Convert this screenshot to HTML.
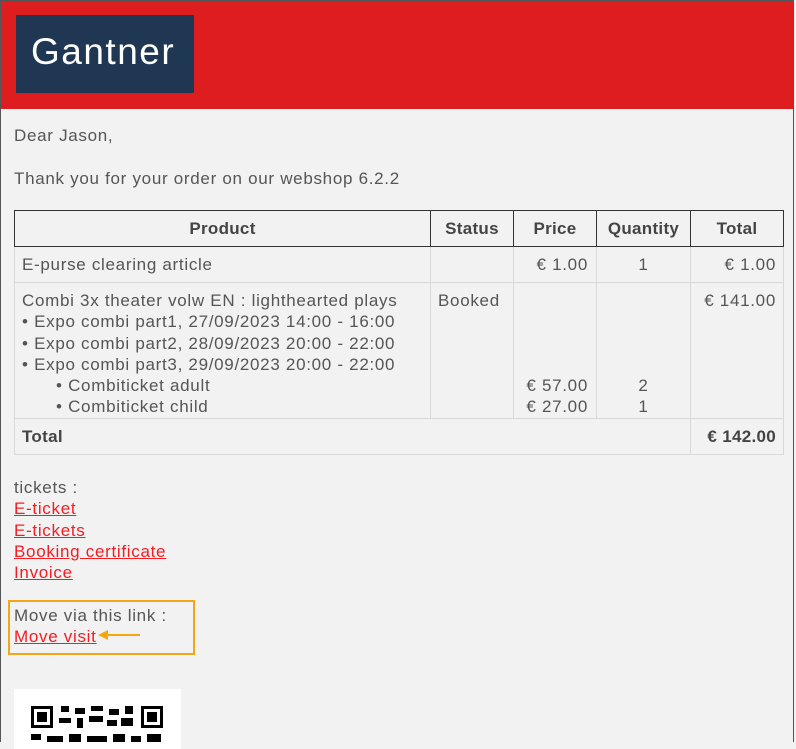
<!DOCTYPE html>
<html><head><meta charset="utf-8"><style>
*{margin:0;padding:0;box-sizing:border-box}
body{width:796px;height:742px;overflow:hidden;background:#f2f2f2;font-family:"Liberation Sans",Arial,sans-serif;font-size:17px;letter-spacing:0.7px;color:#555;position:relative}
.frame{position:absolute;left:0;top:0;width:794px;height:742px;border:1px solid #555;border-bottom:none}
.hdr{position:absolute;left:1px;top:1px;width:792px;height:108px;background:#de1d1f}
.logo{position:absolute;left:15px;top:14px;width:178px;height:78px;background:#1f3753;color:#fff;font-size:37px;line-height:74px;padding-left:15px;letter-spacing:1.5px}
.t{position:absolute;white-space:nowrap;line-height:21.3px}
a{color:#f31d22;text-decoration:underline}
.c{position:absolute;border:1px solid #d9d9d9}
.h{position:absolute;border:1px solid #333;font-weight:bold;text-align:center;line-height:35px;color:#444;letter-spacing:0.3px}
.r{text-align:right}
.qr{position:absolute;left:14px;top:689px;width:167px;height:60px;background:#fff}
</style></head><body>
<div class="frame"></div>
<div class="hdr"><div class="logo">Gantner</div></div>
<div class="t" style="left:14px;top:125px">Dear Jason,</div>
<div class="t" style="left:14px;top:168px">Thank you for your order on our webshop 6.2.2</div>

<div class="c" style="left:14px;top:246px;width:417px;height:37px"></div>
<div class="c" style="left:430px;top:246px;width:84px;height:37px"></div>
<div class="c" style="left:513px;top:246px;width:84px;height:37px"></div>
<div class="c" style="left:596px;top:246px;width:95px;height:37px"></div>
<div class="c" style="left:690px;top:246px;width:94px;height:37px"></div>
<div class="c" style="left:14px;top:282px;width:417px;height:137px"></div>
<div class="c" style="left:430px;top:282px;width:84px;height:137px"></div>
<div class="c" style="left:513px;top:282px;width:84px;height:137px"></div>
<div class="c" style="left:596px;top:282px;width:95px;height:137px"></div>
<div class="c" style="left:690px;top:282px;width:94px;height:137px"></div>
<div class="c" style="left:14px;top:418px;width:677px;height:37px"></div>
<div class="c" style="left:690px;top:418px;width:94px;height:37px"></div>

<div class="h" style="left:14px;top:210px;width:417px;height:37px">Product</div>
<div class="h" style="left:430px;top:210px;width:84px;height:37px">Status</div>
<div class="h" style="left:513px;top:210px;width:84px;height:37px">Price</div>
<div class="h" style="left:596px;top:210px;width:95px;height:37px">Quantity</div>
<div class="h" style="left:690px;top:210px;width:94px;height:37px">Total</div>

<div class="t" style="left:22px;top:254px">E-purse clearing article</div>
<div class="t r" style="left:513px;width:75px;top:254px">€ 1.00</div>
<div class="t" style="left:596px;width:95px;text-align:center;top:254px">1</div>
<div class="t r" style="left:690px;width:86px;top:254px">€ 1.00</div>

<div class="t" style="left:22px;top:290px">Combi 3x theater volw EN : lighthearted plays<br>• Expo combi part1, 27/09/2023 14:00 - 16:00<br>• Expo combi part2, 28/09/2023 20:00 - 22:00<br>• Expo combi part3, 29/09/2023 20:00 - 22:00<br><span style="padding-left:34px">• Combiticket adult</span><br><span style="padding-left:34px">• Combiticket child</span></div>
<div class="t" style="left:438px;top:290px">Booked</div>
<div class="t r" style="left:513px;width:75px;top:375px">€ 57.00<br>€ 27.00</div>
<div class="t" style="left:596px;width:95px;text-align:center;top:375px">2<br>1</div>
<div class="t r" style="left:690px;width:86px;top:290px">€ 141.00</div>

<div class="t" style="left:22px;top:426px;font-weight:bold;color:#444;letter-spacing:0.3px">Total</div>
<div class="t r" style="left:690px;width:86px;top:426px;font-weight:bold;color:#444;letter-spacing:0.3px">€ 142.00</div>

<div class="t" style="left:14px;top:477px">tickets :<br><a>E-ticket</a><br><a>E-tickets</a><br><a>Booking certificate</a><br><a>Invoice</a></div>

<div style="position:absolute;left:8px;top:600px;width:187px;height:55px;border:2px solid #f3a712"></div>
<div class="t" style="left:14px;top:605px">Move via this link :<br><a>Move visit</a></div>
<svg style="position:absolute;left:96px;top:628px" width="46" height="14"><path d="M44 7H10" stroke="#f3a712" stroke-width="2"/><path d="M2 7L12 2V12Z" fill="#f3a712"/></svg>

<div class="qr"><svg style="position:absolute;left:17px;top:17px" width="132" height="40">
<g fill="#000">
<rect x="0" y="0" width="22" height="22"/><rect x="110" y="0" width="22" height="22"/>
<rect x="30" y="0" width="8" height="6"/><rect x="44" y="2" width="10" height="6"/><rect x="60" y="0" width="12" height="5"/><rect x="78" y="3" width="10" height="6"/><rect x="94" y="0" width="8" height="8"/>
<rect x="28" y="12" width="12" height="5"/><rect x="46" y="12" width="6" height="10"/><rect x="58" y="10" width="14" height="6"/><rect x="76" y="14" width="10" height="6"/><rect x="90" y="12" width="12" height="8"/>
<rect x="0" y="28" width="10" height="6"/><rect x="16" y="30" width="16" height="6"/><rect x="38" y="28" width="12" height="8"/><rect x="56" y="30" width="20" height="6"/><rect x="82" y="28" width="12" height="8"/><rect x="100" y="30" width="10" height="6"/><rect x="116" y="28" width="14" height="8"/>
</g>
<g fill="#fff"><rect x="3" y="3" width="16" height="16"/><rect x="113" y="3" width="16" height="16"/></g>
<g fill="#000"><rect x="6" y="6" width="10" height="10"/><rect x="116" y="6" width="10" height="10"/></g>
</svg></div>
</body></html>
